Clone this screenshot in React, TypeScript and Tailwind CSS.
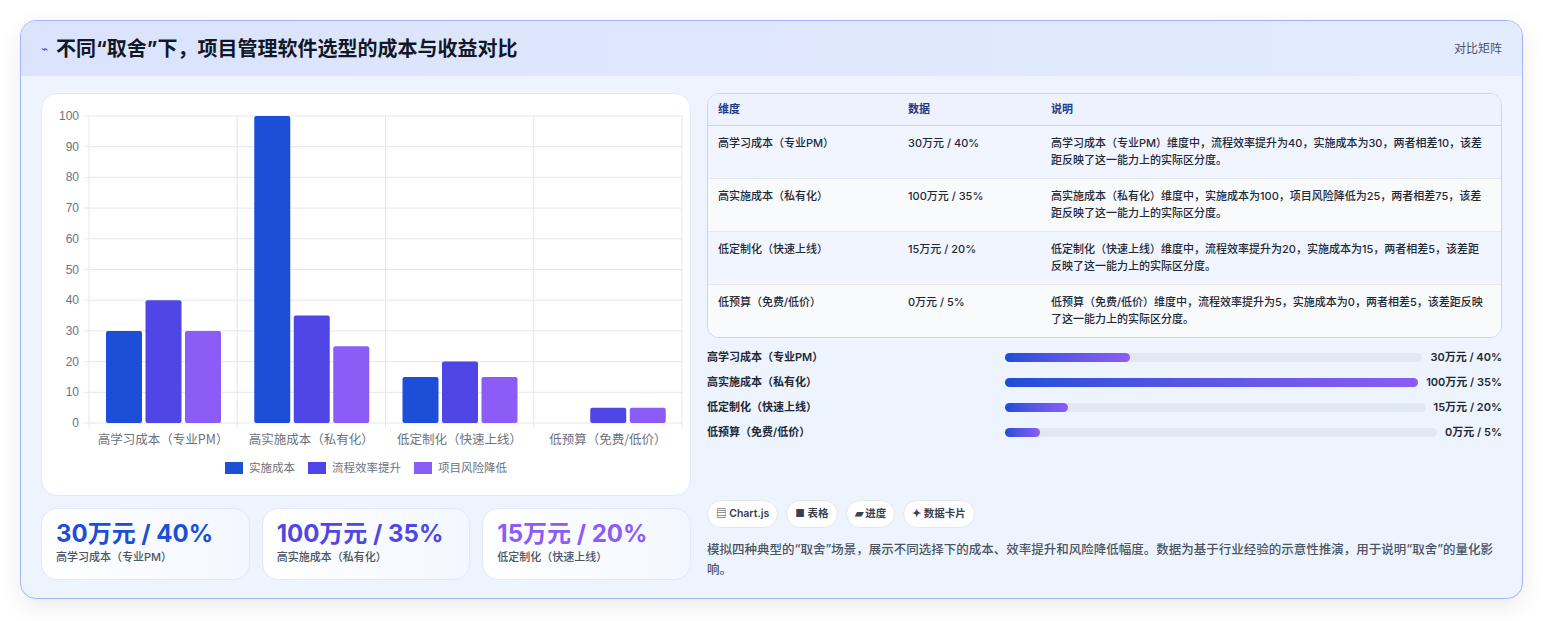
import React from "react";

const cats = ["高学习成本（专业PM）", "高实施成本（私有化）", "低定制化（快速上线）", "低预算（免费/低价）"];
const data = [
  [30, 40, 30],
  [100, 35, 25],
  [15, 20, 15],
  [0, 5, 5],
];
const colors = ["#1d4ed8", "#4f46e5", "#8b5cf6"];
const rows = [
  ["高学习成本（专业PM）", "30万元 / 40%", "高学习成本（专业PM）维度中，流程效率提升为40，实施成本为30，两者相差10，该差距反映了这一能力上的实际区分度。"],
  ["高实施成本（私有化）", "100万元 / 35%", "高实施成本（私有化）维度中，实施成本为100，项目风险降低为25，两者相差75，该差距反映了这一能力上的实际区分度。"],
  ["低定制化（快速上线）", "15万元 / 20%", "低定制化（快速上线）维度中，流程效率提升为20，实施成本为15，两者相差5，该差距反映了这一能力上的实际区分度。"],
  ["低预算（免费/低价）", "0万元 / 5%", "低预算（免费/低价）维度中，流程效率提升为5，实施成本为0，两者相差5，该差距反映了这一能力上的实际区分度。"],
];
const bars = [
  ["高学习成本（专业PM）", "30万元 / 40%", 30],
  ["高实施成本（私有化）", "100万元 / 35%", 100],
  ["低定制化（快速上线）", "15万元 / 20%", 15],
  ["低预算（免费/低价）", "0万元 / 5%", 8],
] as const;

function Chart() {
  const W = 650, H = 400;
  const x0 = 47, x1 = 640, y0 = 329, yTop = 22;
  const sy = (v: number) => y0 - (v / 100) * (y0 - yTop);
  const cw = (x1 - x0) / 4;
  return (
    <svg width={W} height={H} className="block">
      {Array.from({ length: 11 }, (_, i) => i * 10).map((v) => (
        <g key={v}>
          <line x1={x0 - 5} x2={x1} y1={sy(v)} y2={sy(v)} stroke="#e5e7eb" />
          <text x={x0 - 10} y={sy(v) + 4} textAnchor="end" fontSize="12" fill="#6b7280" fontFamily="Liberation Sans, sans-serif">{v}</text>
        </g>
      ))}
      {[0, 1, 2, 3, 4].map((i) => (
        <line key={i} x1={x0 + i * cw} x2={x0 + i * cw} y1={yTop} y2={y0 + 5} stroke="#e5e7eb" />
      ))}
      {data.map((d, ci) =>
        d.map((v, si) => {
          const bx = x0 + ci * cw + 17 + si * 39.5;
          return v > 0 ? (
            <rect key={ci + "-" + si} x={bx} y={sy(v)} width={36} height={y0 - sy(v)} rx={2} fill={colors[si]} />
          ) : null;
        })
      )}
      {cats.map((c, i) => (
        <text key={c} x={x0 + i * cw + cw / 2} y={y0 + 21} textAnchor="middle" fontSize="12.5" fill="#6b7280" fontFamily="'Noto Sans CJK SC', sans-serif">{c}</text>
      ))}
      {["实施成本", "流程效率提升", "项目风险降低"].map((t, i) => {
        const xs = [183, 266, 372][i];
        return (
          <g key={t}>
            <rect x={xs} y={368} width={18} height={12} fill={colors[i]} />
            <text x={xs + 24} y={378} fontSize="11.5" fill="#6b7280" fontFamily="'Noto Sans CJK SC', sans-serif">{t}</text>
          </g>
        );
      })}
    </svg>
  );
}

export default function App() {
  return (
    <div className="min-h-[621px] bg-white px-5 pt-5" style={{ fontFamily: "Inter, 'Noto Sans CJK SC', sans-serif" }}>
      <div className="rounded-2xl border border-[#a5b4fc] bg-[#eef4fe] overflow-hidden shadow-[0_8px_24px_rgba(0,0,0,0.08)]">
        <div className="h-[55px] flex items-center justify-between px-5 bg-gradient-to-r from-[#dbe3fd] to-[#e2ecfd]">
          <div className="flex items-center gap-2">
            <span className="text-[#3b5bdb] text-xs">⌁</span>
            <span className="text-[20px] font-bold text-[#111827]">不同“取舍”下，项目管理软件选型的成本与收益对比</span>
          </div>
          <span className="text-xs text-[#4b5563]">对比矩阵</span>
        </div>
        <div className="flex gap-4 px-5 pt-[17px] pb-[18px]">
          <div className="w-[650px] flex flex-col gap-3">
            <div className="h-[403px] rounded-2xl bg-white border border-[#e0e7ff]">
              <Chart />
            </div>
            <div className="grid grid-cols-3 gap-3">
              {[
                ["30万元 / 40%", "高学习成本（专业PM）", "text-[#1d4ed8]"],
                ["100万元 / 35%", "高实施成本（私有化）", "text-[#4f46e5]"],
                ["15万元 / 20%", "低定制化（快速上线）", "text-[#8b5cf6]"],
              ].map(([v, l, c]) => (
                <div key={l} className="h-[72px] rounded-2xl bg-gradient-to-r from-white to-[#f3f7ff] border border-[#e0e7ff] px-[14px] pt-[10px]">
                  <div className={"text-[24px] font-bold leading-[30px] " + c}>{v}</div>
                  <div className="text-[11px] text-[#4b5563] font-medium">{l}</div>
                </div>
              ))}
            </div>
          </div>
          <div className="flex-1 flex flex-col">
            <div className="rounded-xl border border-[#c7d2fe] overflow-hidden bg-white text-[11px] text-[#1f2937] font-medium">
              <div className="flex h-[32px] items-center bg-[#eef2ff] border-b border-[#c7d2fe] text-[#1e3a8a] font-semibold">
                <div className="w-[200px] pl-[10px]">维度</div>
                <div className="w-[143px]">数据</div>
                <div className="flex-1">说明</div>
              </div>
              {rows.map((r, i) => (
                <div key={i} className={"flex py-[9px] leading-[17px] border-b border-[#e5e7eb] last:border-b-0 " + (i % 2 === 0 ? "bg-[#f1f5ff]" : "bg-[#f8fafc]")}>
                  <div className="w-[200px] pl-[10px]">{r[0]}</div>
                  <div className="w-[143px]">{r[1]}</div>
                  <div className="flex-1 pr-4">{r[2]}</div>
                </div>
              ))}
            </div>
            <div className="flex flex-col gap-[9px] mt-[11px]">
              {bars.map(([l, v, p]) => (
                <div key={l} className="flex items-center h-4 text-[11px] font-semibold text-[#1f2937]">
                  <div className="w-[298px] shrink-0">{l}</div>
                  <div className="flex-1 h-[9px] rounded-full bg-[#e2e8f0] mr-2">
                    <div className="h-full rounded-full bg-gradient-to-r from-[#1d4ed8] to-[#8b5cf6]" style={{ width: p + "%" }} />
                  </div>
                  <div className="shrink-0">{v}</div>
                </div>
              ))}
            </div>
            <div className="flex gap-2 mt-auto">
              {["▤ Chart.js", "■ 表格", "▰ 进度", "✦ 数据卡片"].map((t) => (
                <span key={t} className="rounded-full bg-white border border-[#e5e7eb] px-2 h-[28px] flex items-center text-[10.5px] font-semibold text-[#374151]">{t}</span>
              ))}
            </div>
            <p className="mt-[12px] text-[12.5px] leading-[20px] text-[#4b5563] font-medium pr-2">
              模拟四种典型的“取舍”场景，展示不同选择下的成本、效率提升和风险降低幅度。数据为基于行业经验的示意性推演，用于说明“取舍”的量化影响。
            </p>
          </div>
        </div>
      </div>
    </div>
  );
}
